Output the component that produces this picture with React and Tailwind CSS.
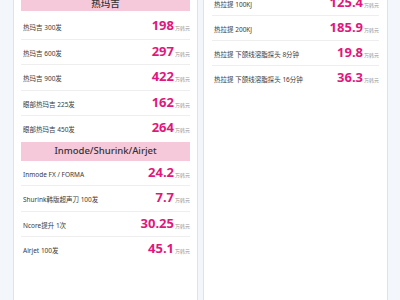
import React from "react";

const left1 = [
  ["热玛吉 300发", "198"],
  ["热玛吉 600发", "297"],
  ["热玛吉 900发", "422"],
  ["眼部热玛吉 225发", "162"],
  ["眼部热玛吉 450发", "264"],
];
const left2 = [
  ["Inmode FX / FORMA", "24.2"],
  ["Shurink韩版超声刀 100发", "7.7"],
  ["Ncore提升 1次", "30.25"],
  ["Airjet 100发", "45.1"],
];
const right1 = [
  ["热拉提 100KJ", "125.4"],
  ["热拉提 200KJ", "185.9"],
  ["热拉提 下颌线溶脂探头 8分钟", "19.8"],
  ["热拉提 下颌线溶脂探头 16分钟", "36.3"],
];

const cjk = { fontFamily: '"Noto Sans", "Noto Sans CJK SC", sans-serif' };

function Row({ label, value, last, tall }) {
  return (
    <div
      className={
        "flex items-baseline justify-between pt-[5px] pl-[2px] " +
        (tall ? "h-[25.5px] " : "h-[25px] ") +
        (last ? "" : "border-b border-[#eeeeee]")
      }
    >
      <span className="text-[6.5px] text-[#3a3a3a] leading-none">{label}</span>
      <span className="flex items-baseline">
        <span className="text-[13px] font-bold text-[#e0177c] leading-none">{value}</span>
        <span className="text-[5px] text-[#999999] ml-[1px] leading-none">万韩元</span>
      </span>
    </div>
  );
}

function Header({ children, className = "" }) {
  return (
    <div
      className={
        "h-[19px] bg-[#f6c9da] flex items-center justify-center text-[9.5px] font-medium text-[#333333] " +
        className
      }
    >
      {children}
    </div>
  );
}

export default function App() {
  return (
    <div className="w-[400px] h-[300px] overflow-hidden bg-[#f3f6fa]" style={cjk}>
      <div className="flex gap-[5px] pl-[13px] -mt-[20px]">
        <div className="w-[185px] h-[340px] bg-white border border-[#e2e2e2] px-[7px] pt-[11px]">
          <Header className="mb-[3px] pt-[5px]">热玛吉</Header>
          {left1.map(([l, v], i) => (
            <Row key={l} label={l} value={v} tall last={i === left1.length - 1} />
          ))}
          <Header>Inmode/Shurink/Airjet</Header>
          {left2.map(([l, v], i) => (
            <Row key={l} label={l} value={v} tall last={i === left2.length - 1} />
          ))}
        </div>
        <div className="w-[185px] h-[340px] bg-white border border-[#e2e2e2] px-[8px] pt-[10px]">
          {right1.map(([l, v], i) => (
            <Row key={l} label={l} value={v} last={i === right1.length - 1} />
          ))}
        </div>
      </div>
    </div>
  );
}
